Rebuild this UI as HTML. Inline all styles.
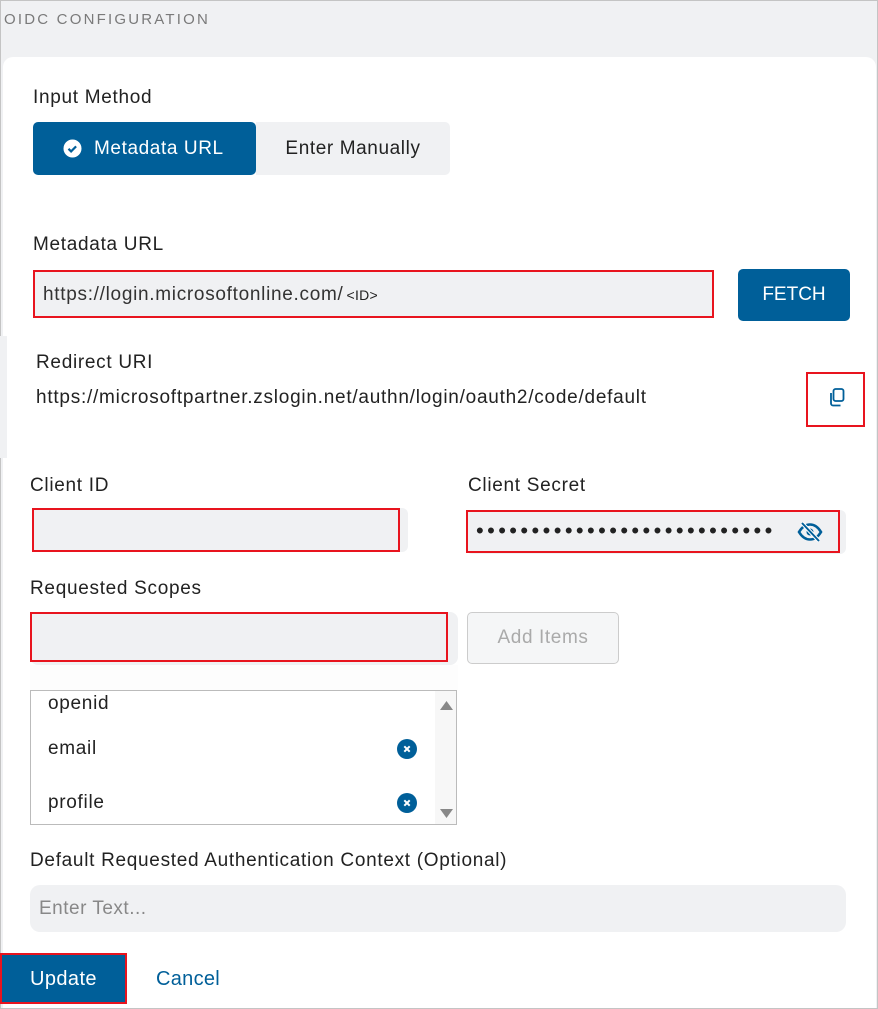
<!DOCTYPE html>
<html><head><meta charset="utf-8"><style>
*{box-sizing:border-box;margin:0;padding:0}
body{width:878px;height:1009px;overflow:hidden;background:#fff;font-family:"Liberation Sans",sans-serif;color:#222;position:relative}
.frame{position:absolute;left:0;top:0;width:878px;height:1009px;border:1px solid #c4c4c4;background:#f0f1f3}
.card{position:absolute;left:3px;top:57px;width:873px;height:951px;background:#fff;border-radius:10px 10px 0 0}
.a{position:absolute;white-space:nowrap}
.lbl{font-size:19px;letter-spacing:0.7px;color:#222}
.inp{position:absolute;background:#f0f1f3;border:2px solid #e8141e}
.blue{background:#005f99;color:#fff}
</style></head><body>
<div class="frame"></div>
<div class="card"></div>
<div class="a" style="left:4px;top:11px;font-size:15px;letter-spacing:2.2px;color:#7a7a7a">OIDC CONFIGURATION</div>

<div class="a lbl" style="left:33px;top:87px">Input Method</div>
<div class="a blue" style="left:33px;top:122px;width:223px;height:53px;border-radius:5px;font-size:19px;letter-spacing:0.6px;line-height:53px;padding-left:61px">Metadata URL</div>
<svg class="a" style="left:63px;top:139px" width="19" height="19" viewBox="0 0 19 19"><circle cx="9.5" cy="9.5" r="9" fill="#fff"/><path d="M5.5 9.8l2.6 2.6 5-5" stroke="#005f99" stroke-width="2.2" fill="none"/></svg>
<div class="a" style="left:256px;top:122px;width:194px;height:53px;border-radius:0 5px 5px 0;background:#f0f1f3;font-size:19px;letter-spacing:0.6px;line-height:53px;text-align:center;color:#222">Enter Manually</div>

<div class="a lbl" style="left:33px;top:234px">Metadata URL</div>
<div class="inp" style="left:33px;top:270px;width:681px;height:48px"></div>
<div class="a" style="left:43px;top:284px;font-size:19px;letter-spacing:0.7px;color:#333">https://login.microsoftonline.com/<span style="font-size:14px;letter-spacing:0.3px;color:#222;margin-left:3px">&lt;ID&gt;</span></div>
<div class="a blue" style="left:738px;top:269px;width:112px;height:52px;border-radius:5px;font-size:19px;line-height:52px;text-align:center">FETCH</div>

<div class="a" style="left:0;top:336px;width:7px;height:122px;background:#f0f1f3"></div>
<div class="a lbl" style="left:36px;top:352px">Redirect URI</div>
<div class="a" style="left:36px;top:387px;font-size:19px;letter-spacing:0.75px;color:#222">https://microsoftpartner.zslogin.net/authn/login/oauth2/code/default</div>
<div class="a" style="left:806px;top:372px;width:59px;height:55px;border:2px solid #e8141e"></div>
<svg class="a" style="left:828px;top:388px" width="18" height="20" viewBox="0 0 18 20"><rect x="5.5" y="1" width="10" height="12" rx="2" fill="none" stroke="#005f99" stroke-width="1.8"/><path d="M3 5v10.5a2 2 0 0 0 2 2h7.5" fill="none" stroke="#005f99" stroke-width="1.8"/></svg>

<div class="a lbl" style="left:30px;top:475px">Client ID</div>
<div class="a" style="left:32px;top:508px;width:376px;height:44px;background:#f0f1f3;border-radius:6px"></div>
<div class="inp" style="left:32px;top:508px;width:368px;height:44px"></div>
<div class="a lbl" style="left:468px;top:475px">Client Secret</div>
<div class="a" style="left:466px;top:510px;width:380px;height:44px;background:#f0f1f3;border-radius:6px"></div>
<div class="inp" style="left:466px;top:510px;width:374px;height:43px"></div>
<div class="a" style="left:476px;top:518px;font-size:22px;letter-spacing:3.4px;color:#222">•••••••••••••••••••••••••••</div>
<svg class="a" style="left:797px;top:521px" width="26" height="22" viewBox="0 0 26 22"><path d="M2 11c3-5 7-7.5 11-7.5S21 6 24 11c-3 5-7 7.5-11 7.5S5 16 2 11z" fill="none" stroke="#005f99" stroke-width="2.6"/><circle cx="13" cy="11" r="3.5" fill="#005f99"/><path d="M5 2l17 18" stroke="#fff" stroke-width="4"/><path d="M5 2l17 18" stroke="#005f99" stroke-width="2"/></svg>

<div class="a lbl" style="left:30px;top:578px">Requested Scopes</div>
<div class="a" style="left:30px;top:612px;width:428px;height:53px;background:#f0f1f3;border-radius:8px"></div>
<div class="inp" style="left:30px;top:612px;width:418px;height:50px"></div>
<div class="a" style="left:467px;top:612px;width:152px;height:52px;border:1px solid #ccc;border-radius:5px;background:#f5f6f7;font-size:19px;letter-spacing:0.6px;line-height:50px;text-align:center;color:#aaa">Add Items</div>
<div class="a" style="left:30px;top:665px;width:428px;height:25px;background:#fdfdfd"></div>
<div class="a" style="left:30px;top:690px;width:427px;height:135px;border:1px solid #bbb;background:#fff"></div>
<div class="a" style="left:435px;top:691px;width:21px;height:133px;background:#f7f7f7"></div>
<svg class="a" style="left:439px;top:699px" width="15" height="12"><path d="M1 11L7.5 2 14 11z" fill="#888"/></svg>
<svg class="a" style="left:439px;top:808px" width="15" height="12"><path d="M1 1L7.5 10 14 1z" fill="#888"/></svg>
<div class="a lbl" style="left:48px;top:693px">openid</div>
<div class="a lbl" style="left:48px;top:738px">email</div>
<div class="a lbl" style="left:48px;top:792px">profile</div>
<svg class="a" style="left:397px;top:739px" width="20" height="20"><circle cx="10" cy="10" r="10" fill="#005f99"/><path d="M7.3 7.3l5.4 5.4M12.7 7.3l-5.4 5.4" stroke="#fff" stroke-width="2"/></svg>
<svg class="a" style="left:397px;top:793px" width="20" height="20"><circle cx="10" cy="10" r="10" fill="#005f99"/><path d="M7.3 7.3l5.4 5.4M12.7 7.3l-5.4 5.4" stroke="#fff" stroke-width="2"/></svg>

<div class="a lbl" style="left:30px;top:850px">Default Requested Authentication Context (Optional)</div>
<div class="a" style="left:30px;top:885px;width:816px;height:47px;background:#f0f1f3;border-radius:10px;font-size:19px;letter-spacing:0.5px;line-height:47px;padding-left:9px;color:#888">Enter Text...</div>

<div class="a blue" style="left:0;top:953px;width:127px;height:51px;border:2px solid #e8141e;font-size:20px;letter-spacing:0.4px;line-height:49px;text-align:center">Update</div>
<div class="a" style="left:156px;top:968px;font-size:20px;letter-spacing:0.3px;color:#005f99">Cancel</div>
</body></html>
